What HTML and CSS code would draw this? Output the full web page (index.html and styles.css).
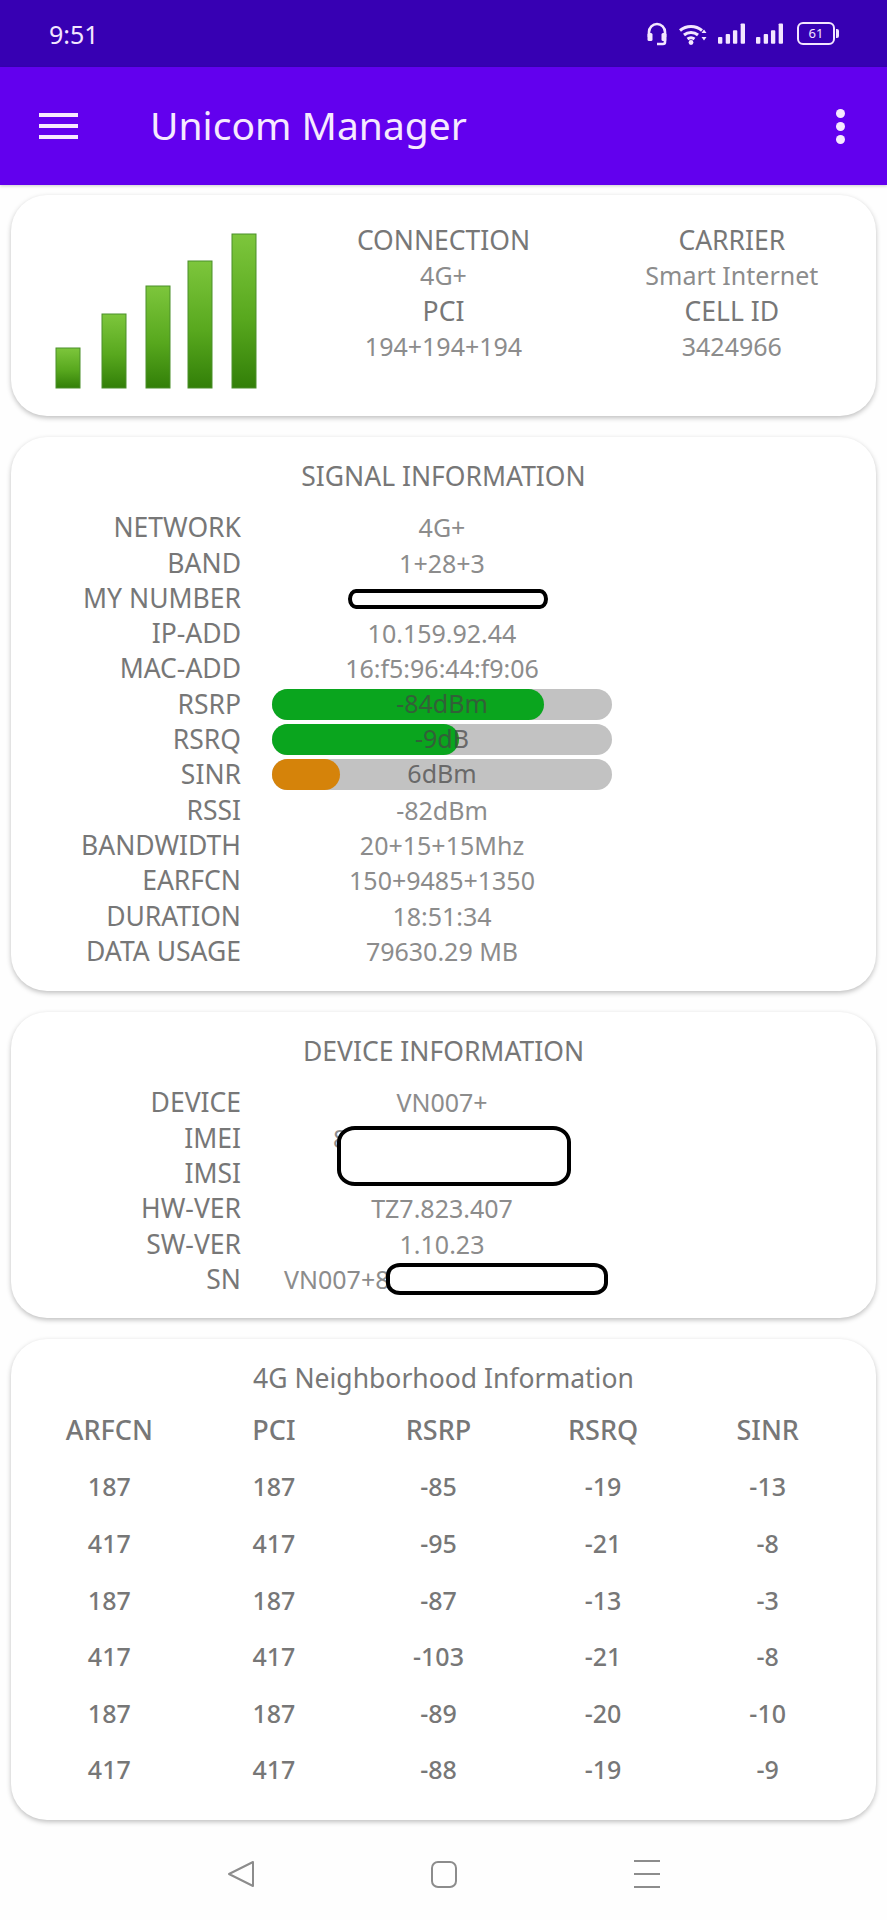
FILE: index.html

```html
<!DOCTYPE html>
<html lang="en">
<head>
  <meta charset="UTF-8">
  <title>Unicom Manager</title>
  <meta name="viewport" content="width=device-width, initial-scale=1.0">
  <link rel="stylesheet" href="styles.css">
</head>
<body>
  <div class="status-bar">
    <span class="clock">9:51</span>
    <div class="status-icons">
      <svg width="22" height="24" viewBox="0 0 22 24" fill="none" stroke="#f3e6ff" stroke-width="2.6">
        <path d="M3 15V10a8 8 0 0 1 16 0v5"/>
        <rect x="1.5" y="11" width="5" height="8" rx="1.5" fill="#f3e6ff" stroke="none"/>
        <rect x="15.5" y="11" width="5" height="8" rx="1.5" fill="#f3e6ff" stroke="none"/>
        <path d="M19 18v2a2 2 0 0 1-2 2h-6"/>
      </svg>
      <svg width="28" height="22" viewBox="0 0 28 22" fill="none" stroke="#f3e6ff" stroke-width="3">
        <path d="M1 7.5a17 17 0 0 1 22 0"/>
        <path d="M5 12a11 11 0 0 1 14 0"/>
        <path d="M8.5 16a6 6 0 0 1 7 0"/>
        <circle cx="12" cy="19.5" r="2.4" fill="#f3e6ff" stroke="none"/>
        <path d="M27.5 10l-2.5-3.500-2.500 3.500zM27.500 14l-2.500 3.500-2.500-3.500z" fill="#f3e6ff" stroke="none"/>
      </svg>
      <svg class="cell" width="27" height="21" viewBox="0 0 28 21" fill="#f3e6ff">
        <rect x="0" y="14" width="4.500" height="7" rx="1"/>
        <rect x="8" y="11" width="4.500" height="10" rx="1"/>
        <rect x="15.500" y="7" width="4.500" height="14" rx="1"/>
        <rect x="23.500" y="0" width="4.500" height="21" rx="1"/>
      </svg>
      <svg class="cell" width="27" height="21" viewBox="0 0 28 21" fill="#f3e6ff">
        <rect x="0" y="14" width="4.500" height="7" rx="1"/>
        <rect x="8" y="11" width="4.500" height="10" rx="1"/>
        <rect x="15.500" y="7" width="4.500" height="14" rx="1"/>
        <rect x="23.500" y="0" width="4.500" height="21" rx="1"/>
      </svg>
      <div class="battery"><span class="battery-level">61</span></div>
    </div>
  </div>

  <header class="app-bar">
    <div class="burger"><i></i><i></i><i></i></div>
    <h1 class="app-title">Unicom Manager</h1>
    <div class="kebab"><i></i><i></i><i></i></div>
  </header>

  <main class="content">
    <section class="card summary">
      <div class="signal-icon">
        <svg width="202" height="156" viewBox="0 0 202 156">
          <defs>
            <linearGradient id="barfill" x1="0" y1="0" x2="0" y2="1">
              <stop offset="0" stop-color="#7dc63c"/>
              <stop offset="0.55" stop-color="#58a81e"/>
              <stop offset="1" stop-color="#327f08"/>
            </linearGradient>
          </defs>
          <rect class="signal-bar" x="1" y="115" width="24" height="40"/>
          <rect class="signal-bar" x="47" y="81" width="24" height="74"/>
          <rect class="signal-bar" x="91" y="53" width="24" height="102"/>
          <rect class="signal-bar" x="133" y="28" width="24" height="127"/>
          <rect class="signal-bar" x="177" y="1" width="24" height="154"/>
        </svg>
      </div>
      <div class="summary-col">
        <div class="label">CONNECTION</div>
        <div class="value">4G+</div>
        <div class="label">PCI</div>
        <div class="value">194+194+194</div>
      </div>
      <div class="summary-col">
        <div class="label">CARRIER</div>
        <div class="value">Smart Internet</div>
        <div class="label">CELL ID</div>
        <div class="value">3424966</div>
      </div>
    </section>

    <section class="card">
      <h2 class="card-title">SIGNAL INFORMATION</h2>
      <div class="info-grid">
        <div class="label">NETWORK</div><div class="value">4G+</div>
        <div class="label">BAND</div><div class="value">1+28+3</div>
        <div class="label">MY NUMBER</div><div class="value"><span class="redact redact-number"></span></div>
        <div class="label">IP-ADD</div><div class="value">10.159.92.44</div>
        <div class="label">MAC-ADD</div><div class="value">16:f5:96:44:f9:06</div>
        <div class="label">RSRP</div>
        <div class="value"><div class="meter"><div class="meter-fill green" style="width: 80%"></div><span class="meter-text">-84dBm</span></div></div>
        <div class="label">RSRQ</div>
        <div class="value"><div class="meter"><div class="meter-fill green" style="width: 55%"></div><span class="meter-text">-9dB</span></div></div>
        <div class="label">SINR</div>
        <div class="value"><div class="meter"><div class="meter-fill orange" style="width: 20%"></div><span class="meter-text">6dBm</span></div></div>
        <div class="label">RSSI</div><div class="value">-82dBm</div>
        <div class="label">BANDWIDTH</div><div class="value">20+15+15Mhz</div>
        <div class="label">EARFCN</div><div class="value">150+9485+1350</div>
        <div class="label">DURATION</div><div class="value">18:51:34</div>
        <div class="label">DATA USAGE</div><div class="value">79630.29 MB</div>
      </div>
    </section>

    <section class="card device">
      <h2 class="card-title">DEVICE INFORMATION</h2>
      <div class="info-grid">
        <div class="label">DEVICE</div><div class="value">VN007+</div>
        <div class="label">IMEI</div><div class="value imei">8<span class="redact redact-imei"></span></div>
        <div class="label">IMSI</div><div class="value"></div>
        <div class="label">HW-VER</div><div class="value">TZ7.823.407</div>
        <div class="label">SW-VER</div><div class="value">1.10.23</div>
        <div class="label">SN</div><div class="value serial">VN007+8<span class="redact redact-serial"></span></div>
      </div>
    </section>

    <section class="card neighbors">
      <h2 class="card-title">4G Neighborhood Information</h2>
      <table class="neighbor-table">
        <thead>
          <tr><th>ARFCN</th><th>PCI</th><th>RSRP</th><th>RSRQ</th><th>SINR</th></tr>
        </thead>
        <tbody>
          <tr><td>187</td><td>187</td><td>-85</td><td>-19</td><td>-13</td></tr>
          <tr><td>417</td><td>417</td><td>-95</td><td>-21</td><td>-8</td></tr>
          <tr><td>187</td><td>187</td><td>-87</td><td>-13</td><td>-3</td></tr>
          <tr><td>417</td><td>417</td><td>-103</td><td>-21</td><td>-8</td></tr>
          <tr><td>187</td><td>187</td><td>-89</td><td>-20</td><td>-10</td></tr>
          <tr><td>417</td><td>417</td><td>-88</td><td>-19</td><td>-9</td></tr>
        </tbody>
      </table>
    </section>
  </main>

  <nav class="nav-bar">
    <svg width="28" height="30" viewBox="0 0 28 30" fill="none" stroke="#8c8c8c" stroke-width="2" stroke-linejoin="round"><path d="M26 3v24L2 15z"/></svg>
    <svg width="28" height="30" viewBox="0 0 28 30" fill="none" stroke="#8c8c8c" stroke-width="2"><rect x="2" y="3" width="24" height="25" rx="6"/></svg>
    <svg width="28" height="30" viewBox="0 0 28 30" fill="none" stroke="#8c8c8c" stroke-width="2"><path d="M1 2h26M1 15h26M1 28h26"/></svg>
  </nav>
</body>
</html>
```

FILE: styles.css

```css
body {
  font-family: "Noto Sans", sans-serif;
  margin: 0;
  width: 887px;
  height: 1920px;
  overflow: hidden;
  background-color: #fefefe;
  color: #777;
}
.status-bar {
  height: 67px;
  background-color: #3700b3;
  color: #f3e6ff;
  display: flex;
  justify-content: space-between;
  align-items: center;
  padding: 0 52px 0 49px;
  box-sizing: border-box;
}
.clock {
  font-size: 25px;
}
.status-icons {
  display: flex;
  align-items: center;
  gap: 11px;
}
.battery {
  width: 34px;
  height: 19px;
  border: 2px solid #f3e6ff;
  border-radius: 6px;
  margin-left: 3px;
  display: flex;
  align-items: center;
  justify-content: center;
  position: relative;
}
.battery::after {
  content: "";
  position: absolute;
  right: -6px;
  top: 5px;
  width: 3px;
  height: 9px;
  background-color: #f3e6ff;
  border-radius: 0 2px 2px 0;
}
.battery-level {
  font-size: 13px;
  line-height: 1;
}
.app-bar {
  height: 118px;
  background-color: #6200ee;
  color: #f6e9ff;
  display: flex;
  align-items: center;
  padding: 0 42px 0 39px;
  box-sizing: border-box;
  box-shadow: 0 1px 3px rgba(0,0,0,0.2);
}
.app-title {
  flex: 1;
  margin: 0 0 4px 72px;
  font-size: 39px;
  font-weight: 400;
}
.burger {
  display: flex;
  flex-direction: column;
  gap: 7px;
}
.burger i {
  display: block;
  width: 39px;
  height: 4px;
  background-color: #f6e9ff;
}
.kebab {
  display: flex;
  flex-direction: column;
  gap: 4px;
}
.kebab i {
  display: block;
  width: 9px;
  height: 9px;
  border-radius: 50%;
  background-color: #f6e9ff;
}
.content {
  padding: 10px 11px 0;
}
.card {
  background-color: #fff;
  border-radius: 36px;
  box-shadow: 0 2px 5px rgba(0,0,0,0.25);
  padding: 22px 0;
  margin-bottom: 21px;
}
.summary {
  display: grid;
  grid-template-columns: repeat(3, 1fr);
  height: 221px;
  box-sizing: border-box;
  padding: 28px 0 0;
}
.device {
  padding-bottom: 21px;
}
.signal-icon {
  padding: 10px 0 0 1px;
  text-align: center;
}
.signal-bar {
  fill: url(#barfill);
  stroke: #4b8f2a;
  stroke-width: 1;
}
.summary-col {
  text-align: center;
}
.label, .value, .card-title {
  line-height: 35.3px;
}
.label, .card-title {
  font-size: 26.5px;
  color: #777;
}
.value {
  font-size: 25px;
  color: #8c8c8c;
}
.card-title {
  margin: 0 0 16px;
  font-weight: 400;
  text-align: center;
}
.info-grid {
  display: grid;
  grid-template-columns: 230px 340px;
  column-gap: 31px;
}
.info-grid .label {
  text-align: right;
}
.info-grid .value {
  text-align: center;
  position: relative;
}
.meter {
  position: relative;
  height: 31px;
  margin-top: 2px;
  border-radius: 16px;
  background-color: #c2c2c2;
}
.meter-fill {
  height: 31px;
  border-radius: 16px;
}
.green {
  background-color: #0aa51e;
}
.orange {
  background-color: #d5830a;
}
.meter-text {
  position: absolute;
  left: 0;
  right: 0;
  top: -3px;
  color: #444;
  opacity: 0.7;
}
.info-grid .imei {
  text-align: left;
  padding-left: 61px;
}
.info-grid .serial {
  text-align: left;
  padding-left: 12px;
}
.redact {
  position: absolute;
  background-color: #fff;
  border: 4px solid #000;
  box-sizing: border-box;
}
.redact-number {
  left: 76px;
  top: 8px;
  width: 200px;
  height: 20px;
  border-radius: 8px / 10px;
}
.redact-imei {
  left: 65px;
  top: 5px;
  width: 234px;
  height: 60px;
  border-radius: 18px / 16px;
}
.redact-serial {
  left: 114px;
  top: 1px;
  width: 222px;
  height: 32px;
  border-radius: 14px / 12px;
}
.neighbors .card-title {
  margin-bottom: 5px;
}
.neighbor-table {
  width: 823px;
  margin-left: 16px;
  border-collapse: collapse;
  table-layout: fixed;
}
.neighbor-table th, .neighbor-table td {
  height: 56.6px;
  padding: 0;
  font-size: 25px;
  font-weight: 500;
  text-align: center;
  color: #777;
}
.neighbor-table th {
  font-size: 27px;
}
.nav-bar {
  position: absolute;
  left: 0;
  top: 1859px;
  width: 887px;
  display: grid;
  grid-template-columns: repeat(3, 203px);
  justify-content: center;
  justify-items: center;
}
```
